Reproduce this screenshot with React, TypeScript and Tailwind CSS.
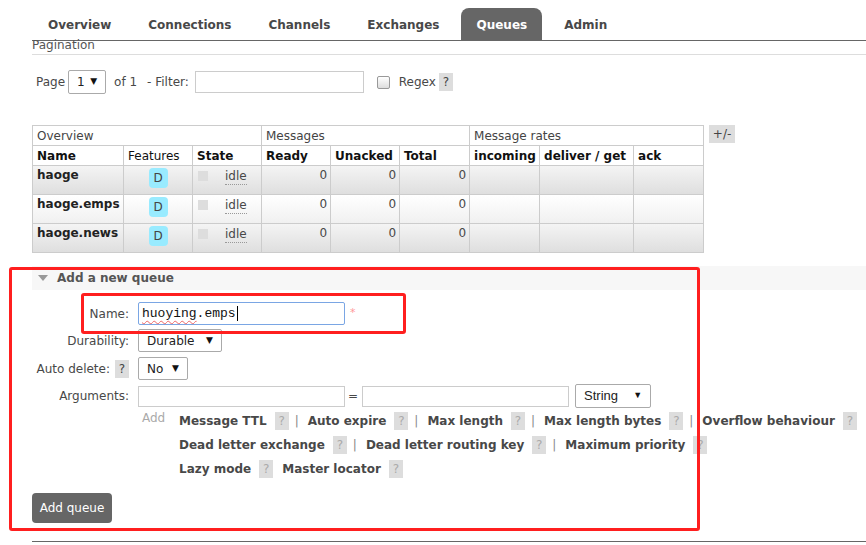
import React from 'react';

const tabs = ['Overview', 'Connections', 'Channels', 'Exchanges', 'Queues', 'Admin'];

const queues = [
  { name: 'haoge', odd: true },
  { name: 'haoge.emps', odd: false },
  { name: 'haoge.news', odd: true },
];

const argRows: { label: string; pipe: boolean }[][] = [
  [
    { label: 'Message TTL', pipe: true },
    { label: 'Auto expire', pipe: true },
    { label: 'Max length', pipe: true },
    { label: 'Max length bytes', pipe: true },
    { label: 'Overflow behaviour', pipe: false },
  ],
  [
    { label: 'Dead letter exchange', pipe: true },
    { label: 'Dead letter routing key', pipe: true },
    { label: 'Maximum priority', pipe: false },
  ],
  [
    { label: 'Lazy mode', pipe: false },
    { label: 'Master locator', pipe: false },
  ],
];

function Help({ light }: { light?: boolean }) {
  return (
    <span
      className={`inline-flex w-[14px] h-[18px] bg-[#ddd] items-center justify-center font-normal text-[12px] ${
        light ? 'text-[#aaa]' : 'text-[#444]'
      }`}
    >
      ?
    </span>
  );
}

function FakeSelect({ value, w, h = 23, font }: { value: string; w: string; h?: number; font?: string }) {
  return (
    <div
      className={`${w} flex items-center justify-between pl-[8px] pr-[8px] border border-[#aaa] rounded-[2px] bg-white text-[#222] ${font ?? ''}`}
      style={{ height: h }}
    >
      <span>{value}</span>
      <span className="text-[9px] text-[#111]">▼</span>
    </div>
  );
}

export default function App() {
  return (
    <div className="relative w-[866px] h-[545px] overflow-hidden bg-white font-['DejaVu_Sans',sans-serif] text-[12px] text-[#484848]">
      {/* tabs */}
      <div className="ml-[32px] pt-[8px] pl-px flex gap-[7px] border-b border-[#666]">
        {tabs.map((t) => (
          <div
            key={t}
            className={`h-[32px] leading-[34px] px-[15px] font-bold ${
              t === 'Queues' ? 'bg-[#666] text-white rounded-t-[8px]' : 'text-[#484848]'
            }`}
          >
            {t}
          </div>
        ))}
      </div>

      {/* pagination header */}
      <div className="ml-[32px] h-[14px] leading-[9px] border-b border-[#ddd] text-[#555]">Pagination</div>

      {/* page row */}
      <div className="mt-[15px] h-[24px] pl-[36px] flex items-center">
        <span>Page</span>
        <div className="ml-[3px]">
          <FakeSelect value="1" w="w-[38px]" h={24} />
        </div>
        <span className="ml-[8px]">of 1</span>
        <span className="ml-[10px]">- Filter:</span>
        <div className="ml-[6px] w-[169px] h-[22px] border border-[#ccc] bg-white" />
        <div className="ml-[13px] w-[13px] h-[13px] border border-[#999] rounded-[2px] bg-gradient-to-b from-white to-[#ddd]" />
        <span className="ml-[9px]">Regex</span>
        <span className="ml-[3px] flex">
          <Help />
        </span>
      </div>

      {/* queue table */}
      <div className="mt-[31px] ml-[32px] flex items-start">
        <table className="border-collapse w-[671px] table-fixed">
          <colgroup>
            <col className="w-[91px]" />
            <col className="w-[69px]" />
            <col className="w-[69px]" />
            <col className="w-[69px]" />
            <col className="w-[69px]" />
            <col className="w-[70px]" />
            <col className="w-[70px]" />
            <col className="w-[94px]" />
            <col className="w-[70px]" />
          </colgroup>
          <thead>
            <tr className="h-[20px]">
              <th colSpan={3} className="border border-[#ccc] text-left font-normal px-[4px] py-0 text-[#444]">
                Overview
              </th>
              <th colSpan={3} className="border border-[#ccc] text-left font-normal px-[4px] py-0 text-[#444]">
                Messages
              </th>
              <th colSpan={3} className="border border-[#ccc] text-left font-normal px-[4px] py-0 text-[#444]">
                Message rates
              </th>
            </tr>
            <tr className="h-[20px] text-[#111]">
              <th className="border border-[#ccc] text-left px-[4px] py-0 font-bold">Name</th>
              <th className="border border-[#ccc] text-left px-[4px] py-0 font-normal">Features</th>
              <th className="border border-[#ccc] text-left px-[4px] py-0 font-bold">State</th>
              <th className="border border-[#ccc] text-left px-[4px] py-0 font-bold">Ready</th>
              <th className="border border-[#ccc] text-left px-[4px] py-0 font-bold">Unacked</th>
              <th className="border border-[#ccc] text-left px-[4px] py-0 font-bold">Total</th>
              <th className="border border-[#ccc] text-left px-[4px] py-0 font-bold">incoming</th>
              <th className="border border-[#ccc] text-left px-[4px] py-0 font-bold">deliver / get</th>
              <th className="border border-[#ccc] text-left px-[4px] py-0 font-bold">ack</th>
            </tr>
          </thead>
          <tbody>
            {queues.map((q) => (
              <tr
                key={q.name}
                className={`h-[29px] align-top leading-[14px] ${
                  q.odd ? 'bg-gradient-to-b from-[#f4f4f4] to-[#dedede]' : 'bg-gradient-to-b from-white to-[#f0f0f0]'
                }`}
              >
                <td className="border border-[#ccc] px-[4px] pt-[2px] font-bold text-[#222]">{q.name}</td>
                <td className="border border-[#ccc] pt-[2px] text-center">
                  <span className="inline-block w-[19px] h-[20px] leading-[20px] rounded-[4px] bg-[#99ebff] text-[#444]">
                    D
                  </span>
                </td>
                <td className="border border-[#ccc] pl-[5px] pt-[3px]">
                  <div className="flex items-start">
                    <span className="mt-[2px] w-[10px] h-[10px] bg-[#ddd]" />
                    <span className="ml-[17px] leading-[15px] border-b border-dotted border-[#999]">idle</span>
                  </div>
                </td>
                <td className="border border-[#ccc] pr-[3px] pt-[2px] text-right">0</td>
                <td className="border border-[#ccc] pr-[3px] pt-[2px] text-right">0</td>
                <td className="border border-[#ccc] pr-[3px] pt-[2px] text-right">0</td>
                <td className="border border-[#ccc]" />
                <td className="border border-[#ccc]" />
                <td className="border border-[#ccc]" />
              </tr>
            ))}
          </tbody>
        </table>
        <div className="ml-[5px] w-[26px] h-[18px] leading-[18px] bg-[#ddd] text-center text-[#444]">+/-</div>
      </div>

      {/* add a new queue */}
      <div className="mt-[13px] ml-[32px] h-[24px] bg-[#f7f7f7] flex items-center pl-[6px]">
        <svg width="10" height="6" viewBox="0 0 10 6">
          <path d="M0 0 L10 0 L5 6 Z" fill="#999" />
        </svg>
        <span className="ml-[9px] font-bold text-[#555]">Add a new queue</span>
      </div>

      <div className="ml-[32px] mt-[12px]">
        <div className="flex items-center h-[23px]">
          <div className="w-[97px] text-right">Name:</div>
          <div className="ml-[9px] w-[207px] h-[23px] border border-[#7aa6e4] rounded-[2px] flex items-center pl-[3px] font-['Liberation_Mono',monospace] text-[13px] text-[#111]">
            <span className="underline decoration-wavy decoration-[#e66] decoration-1 underline-offset-[3px]">huoying</span>
            <span>.emps</span>
            <span className="ml-px w-px h-[15px] bg-black" />
          </div>
          <span className="ml-[5px] text-[#f99] text-[11px] self-start mt-[3px]">*</span>
        </div>
        <div className="flex items-center h-[23px] mt-[4px]">
          <div className="w-[97px] text-right">Durability:</div>
          <div className="ml-[9px]">
            <FakeSelect value="Durable" w="w-[84px]" />
          </div>
        </div>
        <div className="flex items-center h-[23px] mt-[5px]">
          <div className="w-[97px] flex justify-end items-center gap-[5px]">
            <span>Auto delete:</span>
            <Help />
          </div>
          <div className="ml-[9px]">
            <FakeSelect value="No" w="w-[50px]" />
          </div>
        </div>
        <div className="flex items-center h-[24px] mt-[4px]">
          <div className="w-[97px] text-right">Arguments:</div>
          <div className="ml-[9px] w-[207px] h-[21px] border border-[#ccc] bg-white" />
          <span className="ml-[3px]">=</span>
          <div className="ml-[4px] w-[207px] h-[21px] border border-[#ccc] bg-white" />
          <div className="ml-[6px]">
            <FakeSelect value="String" w="w-[76px]" h={24} font="font-['Liberation_Sans',sans-serif] text-[13px]" />
          </div>
        </div>
        <div className="flex mt-[3px]">
          <span className="ml-[110px] w-[37px] text-[#aaa] leading-[14px]">Add</span>
          <div className="flex flex-col gap-[6px] mt-[1px]">
            {argRows.map((row, i) => (
              <div key={i} className="flex items-center h-[18px]">
                {row.map((a, j) => (
                  <React.Fragment key={a.label}>
                    <span className={`font-bold text-[#484848] ${j > 0 ? 'ml-[9px]' : ''}`}>{a.label}</span>
                    <span className="ml-[8px] flex">
                      <Help light />
                    </span>
                    {a.pipe && <span className="ml-[6px] text-[#888]">|</span>}
                  </React.Fragment>
                ))}
              </div>
            ))}
          </div>
        </div>
        <button className="mt-[15px] w-[80px] h-[30px] rounded-[4px] bg-[#666] text-white text-[12px]">
          Add queue
        </button>
        <div className="mt-[18px] border-t border-[#666]" />
      </div>

      {/* red annotation boxes */}
      <div className="absolute left-[9px] top-[267px] w-[691px] h-[264px] border-[3px] border-[#ff1f1f] rounded-[3px] pointer-events-none" />
      <div className="absolute left-[81px] top-[293px] w-[325px] h-[41px] border-[3px] border-[#ff1f1f] rounded-[3px] pointer-events-none" />
    </div>
  );
}
